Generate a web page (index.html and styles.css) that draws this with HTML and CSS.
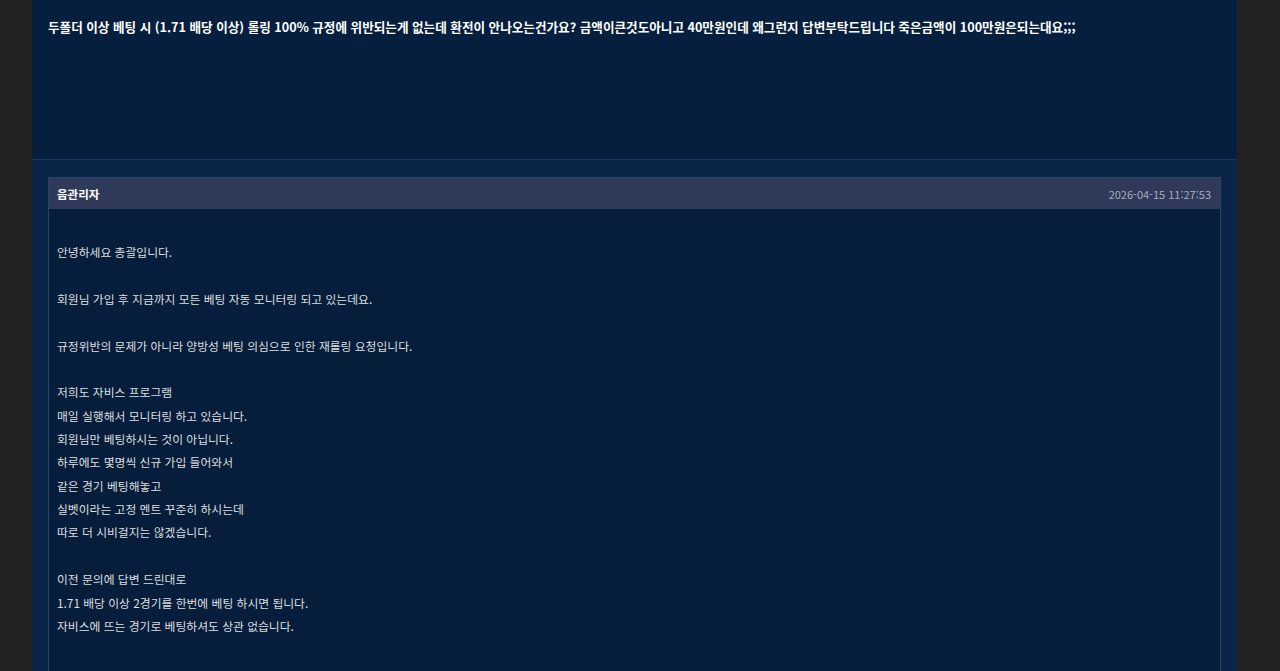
FILE: index.html
```html
<!DOCTYPE html>
<html lang="ko">
<head>
  <meta charset="UTF-8">
  <title>고객센터</title>
  <link rel="stylesheet" href="styles.css">
</head>
<body>

  <div class="wrap">
    <div class="question">
      두폴더 이상 베팅 시 (1.71 배당 이상) 롤링 100% 규정에 위반되는게 없는데 환전이 안나오는건가요? 금액이큰것도아니고 40만원인데 왜그런지 답변부탁드립니다 죽은금액이 100만원은되는대요;;;
    </div>

    <div class="answers">
      <div class="reply">
        <div class="reply-head">
          <span class="writer">음관리자</span>
          <span class="date">2026-04-15 11:27:53</span>
        </div>
        <div class="reply-body">
          <p>&nbsp;</p>
          <p>안녕하세요 총괄입니다.</p>
          <p>&nbsp;</p>
          <p>회원님 가입 후 지금까지 모든 베팅 자동 모니터링 되고 있는데요.</p>
          <p>&nbsp;</p>
          <p>규정위반의 문제가 아니라 양방성 베팅 의심으로 인한 재롤링 요청입니다.</p>
          <p>&nbsp;</p>
          <p>저희도 자비스 프로그램</p>
          <p>매일 실행해서 모니터링 하고 있습니다.</p>
          <p>회원님만 베팅하시는 것이 아닙니다.</p>
          <p>하루에도 몇명씩 신규 가입 들어와서</p>
          <p>같은 경기 베팅해놓고</p>
          <p>실벳이라는 고정 멘트 꾸준히 하시는데</p>
          <p>따로 더 시비걸지는 않겠습니다.</p>
          <p>&nbsp;</p>
          <p>이전 문의에 답변 드린대로</p>
          <p>1.71 배당 이상 2경기를 한번에 베팅 하시면 됩니다.</p>
          <p>자비스에 뜨는 경기로 베팅하셔도 상관 없습니다.</p>
          <p>&nbsp;</p>
          <p>&nbsp;</p>
        </div>
      </div>
    </div>
  </div>

</body>
</html>
```

FILE: styles.css
```css
body {
  margin: 0;
  background: #222222;
  font-family: 'Noto Sans CJK KR', 'Noto Sans', sans-serif;
  color: #e6e6e6;
}

.wrap {
  width: 1205px;
  margin-left: 32px;
  background: #0a2547;
  min-height: 671px;
}

.question {
  background: #071f3e;
  padding: 17px 16px 0 16px;
  height: 142px;
  border-bottom: 1px solid #16375e;
  font-size: 12.6px;
  font-weight: bold;
  line-height: 20px;
  color: #ffffff;
}

.answers {
  padding: 17px 16px 0 16px;
}

.reply {
  border: 1px solid #2a4468;
  background: #061e3c;
}

.reply-head {
  display: flex;
  justify-content: space-between;
  align-items: center;
  height: 31px;
  padding: 0 9px 0 8px;
  background: #2f3a5a;
}

.writer {
  font-size: 11.5px;
  font-weight: bold;
  color: #ffffff;
}

.date {
  font-size: 11px;
  color: #a7adbd;
}

.reply-body {
  padding: 8px 8px 0 8px;
  font-size: 11.8px;
  color: #dedede;
}

.reply-body p {
  margin: 0;
  line-height: 23.35px;
}
```
